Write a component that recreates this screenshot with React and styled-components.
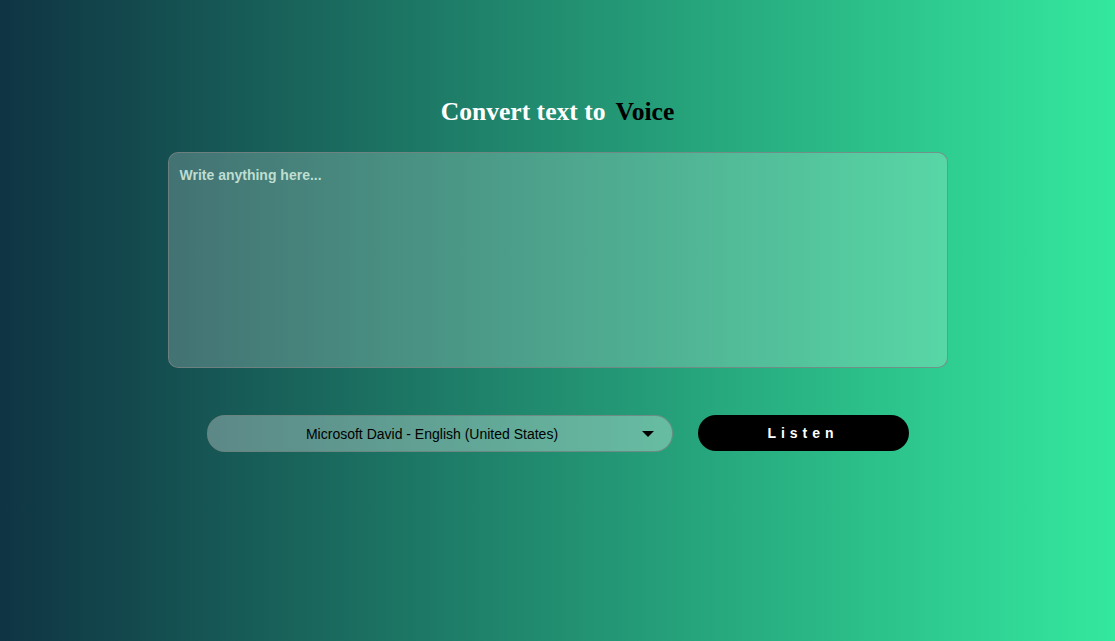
import React, { useState } from 'react';
import styled, { createGlobalStyle } from 'styled-components';

const GlobalStyle = createGlobalStyle`
  html, body {
    margin: 0;
    padding: 0;
    height: 100%;
  }
  #root {
    min-height: 100vh;
  }
`;

const Page = styled.div`
  min-height: 100vh;
  background: linear-gradient(to right, #0f3443, #34e89e);
  display: flex;
  flex-direction: column;
  align-items: center;
  padding-top: 97px;
  box-sizing: border-box;
`;

const Heading = styled.h1`
  margin: 0 0 25px;
  font-family: "Liberation Serif", "Times New Roman", serif;
  font-size: 25.6px;
  font-weight: bold;
  color: #fff;
  line-height: 30px;

  span {
    color: #000;
    margin-left: 10px;
  }
`;

const TextBox = styled.textarea`
  width: 780px;
  height: 216px;
  box-sizing: border-box;
  resize: none;
  border: 1px solid rgba(120, 130, 130, 0.8);
  border-radius: 10px;
  background: rgba(255, 255, 255, 0.2);
  padding: 14px 11px;
  font-family: "Liberation Sans", Arial, sans-serif;
  font-size: 14px;
  font-weight: bold;
  color: #111;
  outline: none;

  &::placeholder {
    color: rgba(215, 240, 225, 0.85);
  }
`;

const Controls = styled.div`
  display: flex;
  align-items: flex-start;
  gap: 25px;
  margin-top: 47px;
  margin-left: 1px;
`;

const SelectWrap = styled.div`
  position: relative;
  width: 466px;
  height: 37px;
`;

const VoiceSelect = styled.select`
  appearance: none;
  width: 100%;
  height: 100%;
  border: 1px solid rgba(110, 130, 125, 0.8);
  border-radius: 18px;
  background: rgba(255, 255, 255, 0.3);
  font-family: "Liberation Sans", Arial, sans-serif;
  font-size: 14px;
  color: #000;
  text-align: center;
  text-align-last: center;
  padding: 0 48px 0 32px;
  outline: none;
`;

const Caret = styled.span`
  position: absolute;
  right: 19px;
  top: 16px;
  width: 0;
  height: 0;
  border-left: 6px solid transparent;
  border-right: 6px solid transparent;
  border-top: 6px solid #000;
  pointer-events: none;
`;

const ListenButton = styled.button`
  width: 211px;
  height: 36px;
  border: none;
  border-radius: 18px;
  background: #000;
  color: #fff;
  font-family: "Liberation Sans", Arial, sans-serif;
  font-size: 14px;
  font-weight: bold;
  letter-spacing: 5px;
  padding-left: 5px;
  cursor: pointer;
`;

export default function App() {
  const [text, setText] = useState('');

  return (
    <>
      <GlobalStyle />
      <Page>
        <Heading>
          Convert text to<span>Voice</span>
        </Heading>
        <TextBox
          placeholder="Write anything here..."
          value={text}
          onChange={(e) => setText(e.target.value)}
        />
        <Controls>
          <SelectWrap>
            <VoiceSelect defaultValue="david">
              <option value="david">Microsoft David - English (United States)</option>
              <option value="zira">Microsoft Zira - English (United States)</option>
            </VoiceSelect>
            <Caret />
          </SelectWrap>
          <ListenButton>Listen</ListenButton>
        </Controls>
      </Page>
    </>
  );
}
